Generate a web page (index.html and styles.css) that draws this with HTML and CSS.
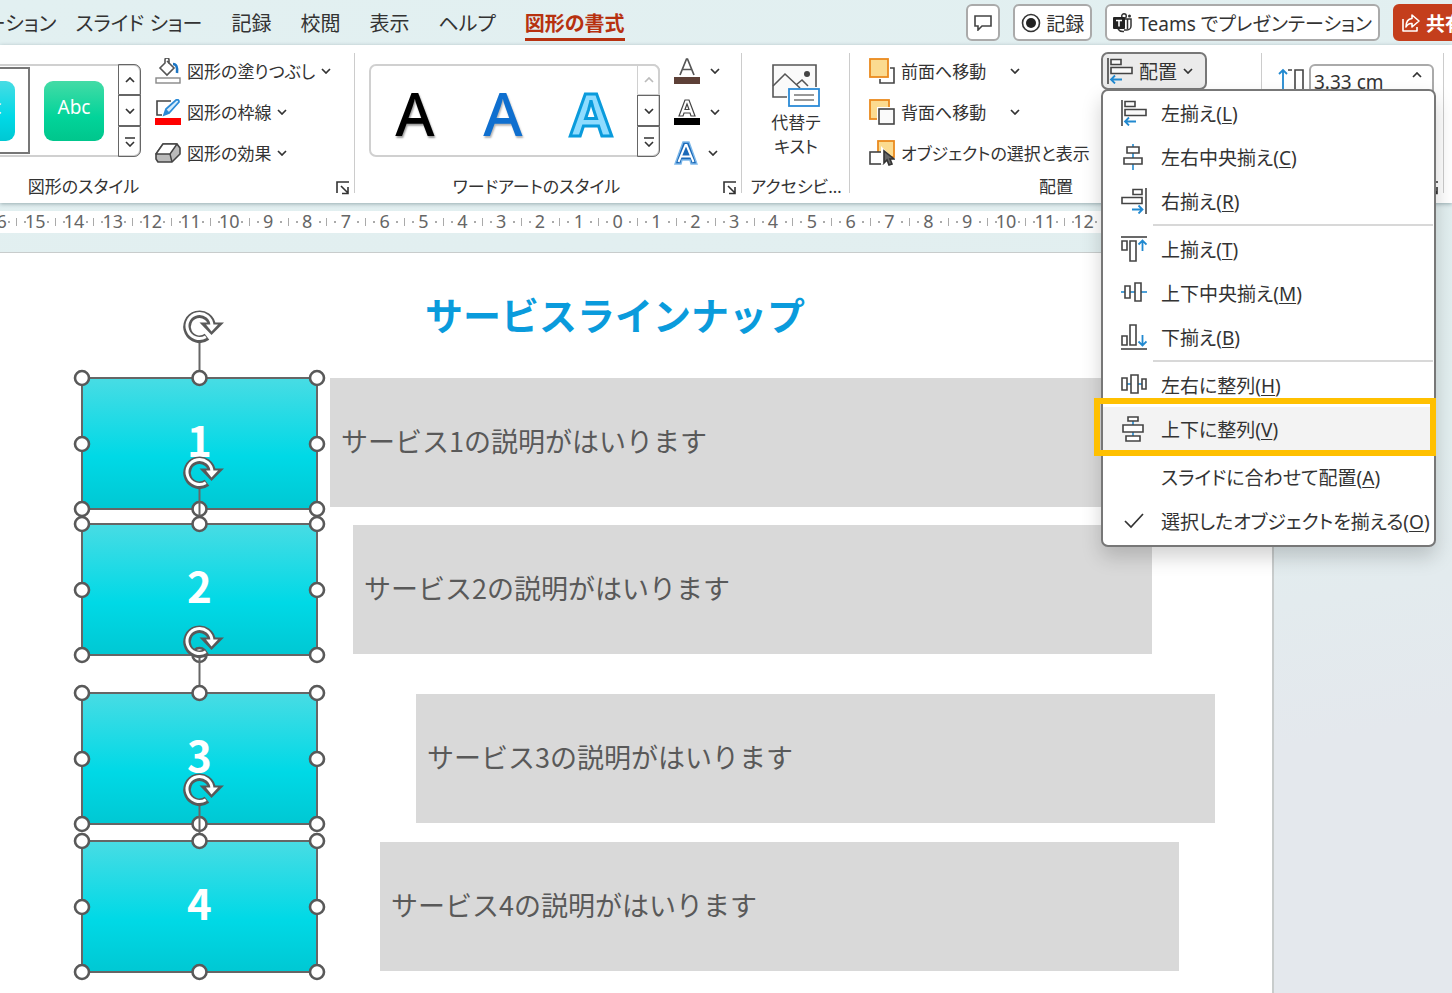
FILE: index.html
```
<!DOCTYPE html>
<html lang="ja">
<head>
    <meta charset="UTF-8">
    <title>図形の書式</title>
    <link rel="stylesheet" href="styles.css">
</head>
<body>
    <!-- 共通アイコン -->
    <svg class="defs" width="0" height="0">
        <symbol id="chev-down" viewBox="0 0 10 6"><path d="M1 1l4 4 4-4" fill="none" stroke="currentColor" stroke-width="1.7"/></symbol>
        <symbol id="chev-up" viewBox="0 0 10 6"><path d="M1 5l4-4 4 4" fill="none" stroke="currentColor" stroke-width="1.7"/></symbol>
        <symbol id="more" viewBox="0 0 12 10"><path d="M1 1h10M2 5l4 4 4-4" fill="none" stroke="currentColor" stroke-width="1.6"/></symbol>
        <symbol id="launcher" viewBox="0 0 14 14"><path d="M1 12V1h12M5 5l7 7M12 6v6.5H6" fill="none" stroke="currentColor" stroke-width="1.6"/></symbol>
        <symbol id="align-left" viewBox="0 0 26 26">
            <path d="M1 0v26" stroke="#444" stroke-width="1.6"/>
            <path d="M4 1.5h10v5H4zM4 9.5h21v6H4z" fill="#fafafa" stroke="#444" stroke-width="1.6"/>
            <path d="M4 21.5h11M8 17.5l-4 4 4 4" fill="none" stroke="#2189d0" stroke-width="1.8"/>
        </symbol>
        <symbol id="selection" viewBox="0 0 235 131" overflow="visible">
            <rect x="0" y="0" width="235" height="131" fill="none" stroke="#666" stroke-width="2"/>
            <path d="M117.500-35V0" stroke="#666" stroke-width="2"/>
            <g fill="#fff" stroke="#595959" stroke-width="2.600">
                <circle cx="0" cy="0" r="7"/><circle cx="117.500" cy="0" r="7"/><circle cx="235" cy="0" r="7"/>
                <circle cx="0" cy="66" r="7"/><circle cx="235" cy="66" r="7"/>
                <circle cx="0" cy="131" r="7"/><circle cx="117.500" cy="131" r="7"/><circle cx="235" cy="131" r="7"/>
            </g>
            <g transform="translate(117.500 -52)">
                <path d="M7.500 10.800A12.500 12.500 0 1 1 12.500 0" fill="none" stroke="#595959" stroke-width="7.600"/>
                <path d="M0-3.500H24.500L12 9z" fill="#595959"/>
                <path d="M6.300 10.800A12.500 12.500 0 1 1 12.500 0" fill="none" stroke="#fff" stroke-width="3"/>
                <path d="M6.500-1.500H18.500L12 5.500z" fill="#fff"/>
            </g>
        </symbol>
    </svg>

    <header class="topbar">
        <nav class="tabs">
            <a href="#">ーション</a>
            <a href="#">スライド ショー</a>
            <a href="#">記録</a>
            <a href="#">校閲</a>
            <a href="#">表示</a>
            <a href="#">ヘルプ</a>
            <a href="#" class="active">図形の書式</a>
        </nav>
        <div class="actions">
            <button class="action comment" aria-label="コメント">
                <svg width="18" height="16" viewBox="0 0 18 16"><path d="M1 1h16v10H8l-4 4v-4H1z" fill="none" stroke="#444" stroke-width="1.6"/></svg>
            </button>
            <button class="action">
                <svg width="20" height="20" viewBox="0 0 20 20"><circle cx="10" cy="10" r="8.500" fill="none" stroke="#333" stroke-width="1.6"/><circle cx="10" cy="10" r="5" fill="#222"/></svg>
                記録
            </button>
            <button class="action teams">
                <svg width="20" height="20" viewBox="0 0 20 20">
                    <path d="M11 6h7v7a4 4 0 0 1-4 4h-3M14.500 6v10M5 16q2 3 6 2.500" fill="none" stroke="#333" stroke-width="1.5"/>
                    <circle cx="11" cy="3" r="2.300" fill="none" stroke="#333" stroke-width="1.4"/><circle cx="16.500" cy="3" r="1.500" fill="#333"/>
                    <rect x="0" y="4" width="12" height="12" rx="1" fill="#222"/>
                    <path d="M3 7.500h6M6 7.500v6" stroke="#fff" stroke-width="1.6"/>
                </svg>
                Teams でプレゼンテーション
            </button>
            <button class="action share">
                <svg width="20" height="20" viewBox="0 0 20 20"><path d="M2 6v12h14v-4M11 2l7 6-7 6v-3.500Q7 10 5 14 5 6 11 5.500z" fill="none" stroke="#fff" stroke-width="1.6" stroke-linejoin="round"/></svg>
                共有
            </button>
        </div>
    </header>

    <div class="ribbon">
        <section class="group styles-group">
            <div class="content">
                <div class="gallery shape-gallery">
                    <button class="preset selected"><span class="swatch cyan">Abc</span></button>
                    <button class="preset"><span class="swatch green">Abc</span></button>
                    <div class="scroller">
                        <button aria-label="上へ"><svg width="10" height="6"><use href="#chev-up"/></svg></button>
                        <button aria-label="下へ"><svg width="10" height="6"><use href="#chev-down"/></svg></button>
                        <button aria-label="その他"><svg width="12" height="10"><use href="#more"/></svg></button>
                    </div>
                </div>
                <div class="rows">
                    <button class="cmd">
                        <svg width="26" height="26" viewBox="0 0 26 26">
                            <path d="M12 3l7 7-7 7-7-7 5-5V2q0-2 2-2t2 2v4" fill="none" stroke="#555" stroke-width="1.6"/>
                            <path d="M18 6q5 0 4 9" fill="none" stroke="#1b75c4" stroke-width="2.500"/>
                            <rect x="1" y="20" width="24" height="5" fill="#fff" stroke="#888" stroke-width="1.4"/>
                        </svg>
                        図形の塗りつぶし
                        <svg width="10" height="6"><use href="#chev-down"/></svg>
                    </button>
                    <button class="cmd">
                        <svg width="26" height="26" viewBox="0 0 26 26">
                            <path d="M16 2H2v14h5" fill="none" stroke="#444" stroke-width="1.6"/>
                            <path d="M9 16l2-6 10-9q3-1 3 2L14 14z" fill="#d4ebfb" stroke="#2b8ad6" stroke-width="1.8"/>
                            <path d="M9 16l2-6 4 4z" fill="#2b8ad6"/>
                            <rect y="19" width="26" height="7" fill="#f00"/>
                        </svg>
                        図形の枠線
                        <svg width="10" height="6"><use href="#chev-down"/></svg>
                    </button>
                    <button class="cmd">
                        <svg width="26" height="26" viewBox="0 0 26 26">
                            <path d="M8 4h14l3 4v6l-8 8H3l-2-3v-5z" fill="#bbb" stroke="#444" stroke-width="1.6" stroke-linejoin="round"/>
                            <path d="M8 4h14l-7 10H1z" fill="#fff" stroke="#444" stroke-width="1.4" stroke-linejoin="round"/>
                            <path d="M15 14l2 8" stroke="#444" stroke-width="1.4"/>
                        </svg>
                        図形の効果
                        <svg width="10" height="6"><use href="#chev-down"/></svg>
                    </button>
                </div>
            </div>
            <div class="label">図形のスタイル</div>
            <button class="launch" aria-label="図形の書式設定"><svg width="14" height="14"><use href="#launcher"/></svg></button>
        </section>

        <section class="group wordart-group">
            <div class="content">
                <div class="gallery">
                    <button class="art black">A</button>
                    <button class="art blue">A</button>
                    <button class="art sky">A</button>
                    <div class="scroller">
                        <button aria-label="上へ" disabled><svg width="10" height="6"><use href="#chev-up"/></svg></button>
                        <button aria-label="下へ"><svg width="10" height="6"><use href="#chev-down"/></svg></button>
                        <button aria-label="その他"><svg width="12" height="10"><use href="#more"/></svg></button>
                    </div>
                </div>
                <div class="rows">
                    <button class="cmd font-cmd" aria-label="文字の塗りつぶし">
                        <svg width="26" height="26" viewBox="0 0 26 26"><path d="M6 17L12.500 1h1L20 17M8.500 11.500h9" fill="none" stroke="#555" stroke-width="1.7"/><rect y="19" width="26" height="7" fill="#5d4037"/></svg>
                        <svg width="10" height="6"><use href="#chev-down"/></svg>
                    </button>
                    <button class="cmd font-cmd" aria-label="文字の輪郭">
                        <svg width="26" height="26" viewBox="0 0 26 26"><path d="M5 17L11 1h4l6 16h-4l-1-3h-6l-1 3zM11 10.500h4L13 5z" fill="#fff" stroke="#444" stroke-width="1.2"/><rect y="19" width="26" height="7" fill="#000"/></svg>
                        <svg width="10" height="6"><use href="#chev-down"/></svg>
                    </button>
                    <button class="cmd font-cmd" aria-label="文字の効果">
                        <svg width="24" height="26" viewBox="0 0 24 26"><path d="M1 24L9 2h6l8 22h-6l-1-4H8l-1 4z" fill="#1b69b8" stroke="#7db8ea" stroke-width="1.4"/><path d="M4.500 22L11.500 5h1l7 17M7.500 16.500h9" fill="none" stroke="#fff" stroke-width="2"/></svg>
                        <svg width="10" height="6"><use href="#chev-down"/></svg>
                    </button>
                </div>
            </div>
            <div class="label">ワードアートのスタイル</div>
            <button class="launch" aria-label="文字の効果の設定"><svg width="14" height="14"><use href="#launcher"/></svg></button>
        </section>

        <section class="group alt-group">
            <div class="content">
                <button class="alt">
                    <svg width="48" height="44" viewBox="0 0 48 44">
                        <path d="M15 33H1V1h43v22" fill="#fafafa" stroke="#555" stroke-width="1.6"/>
                        <path d="M1 22l12-12 15 14M24 21l6-5 6 6" fill="none" stroke="#555" stroke-width="1.6"/>
                        <circle cx="35" cy="10" r="3" fill="#444"/>
                        <rect x="17" y="25" width="30" height="17" fill="#fff" stroke="#2b8ad6" stroke-width="1.8"/>
                        <path d="M22 31h20M22 36h20" stroke="#777" stroke-width="1.6"/>
                    </svg>
                    <span>代替テ<br>キスト</span>
                </button>
            </div>
            <div class="label">アクセシビ…</div>
        </section>

        <section class="group arrange-group">
            <div class="content">
                <div class="rows">
                    <button class="cmd">
                        <svg width="26" height="26" viewBox="0 0 26 26"><path d="M21 10h4v15H11v-4" fill="none" stroke="#444" stroke-width="1.6"/><rect x="1" y="1" width="18" height="18" fill="#fbdb90" stroke="#ea8a1e" stroke-width="1.8"/></svg>
                        前面へ移動
                        <svg class="far" width="10" height="6"><use href="#chev-down"/></svg>
                    </button>
                    <button class="cmd">
                        <svg width="26" height="26" viewBox="0 0 26 26"><rect x="1" y="1" width="19" height="19" fill="#fbdb90" stroke="#ea8a1e" stroke-width="1.8"/><rect x="8" y="8" width="18" height="18" fill="#fff"/><rect x="10" y="10" width="15" height="15" fill="#fafafa" stroke="#444" stroke-width="1.6"/></svg>
                        背面へ移動
                        <svg class="far" width="10" height="6"><use href="#chev-down"/></svg>
                    </button>
                    <button class="cmd">
                        <svg width="26" height="26" viewBox="0 0 26 26"><rect x="9" y="1" width="16" height="16" fill="#fbdb90" stroke="#ea8a1e" stroke-width="1.8"/><rect x="1" y="12" width="12" height="12" fill="#fff" stroke="#444" stroke-width="1.6"/><path d="M12 6v19l14-4z" fill="#fff"/><path d="M15 11v12l3-3 2 5 3-1-2-5h4z" fill="#666" stroke="#333" stroke-width="1.6"/></svg>
                        オブジェクトの選択と表示
                    </button>
                </div>
                <div class="dropdown">
                    <button class="cmd toggle" aria-expanded="true">
                        <svg width="26" height="26"><use href="#align-left"/></svg>
                        配置
                        <svg width="10" height="6"><use href="#chev-down"/></svg>
                    </button>
                    <div class="menu" role="menu">
                        <button role="menuitem">
                            <svg width="26" height="26"><use href="#align-left"/></svg>
                            <span>左揃え(<u>L</u>)</span>
                        </button>
                        <button role="menuitem">
                            <svg width="26" height="26" viewBox="0 0 26 26"><path d="M12 0v26" stroke="#2189d0" stroke-width="1.6"/><path d="M6 3h12v6H6zM3 14h18v6H3z" fill="#fff" stroke="#444" stroke-width="1.6"/></svg>
                            <span>左右中央揃え(<u>C</u>)</span>
                        </button>
                        <button role="menuitem">
                            <svg width="26" height="26" viewBox="0 0 26 26"><path d="M25 0v26" stroke="#444" stroke-width="1.6"/><path d="M12 1.500h9v5h-9zM1 9.500h20v6H1z" fill="#fff" stroke="#444" stroke-width="1.6"/><path d="M11 21.500h10M17.500 17.500l4 4-4 4" fill="none" stroke="#2189d0" stroke-width="1.8"/></svg>
                            <span>右揃え(<u>R</u>)</span>
                        </button>
                        <hr>
                        <button role="menuitem">
                            <svg width="26" height="26" viewBox="0 0 26 26"><path d="M0 1h26" stroke="#444" stroke-width="1.6"/><path d="M1 5h5v9H1zM9 5h6v20H9z" fill="#fff" stroke="#444" stroke-width="1.6"/><path d="M21.500 5v10M17.500 8.500l4-4 4 4" fill="none" stroke="#2189d0" stroke-width="1.8"/></svg>
                            <span>上揃え(<u>T</u>)</span>
                        </button>
                        <button role="menuitem">
                            <svg width="26" height="26" viewBox="0 0 26 26"><path d="M0 12h26" stroke="#2189d0" stroke-width="1.6"/><path d="M4 6h5v12H4zM14 3h6v18h-6z" fill="#fff" stroke="#444" stroke-width="1.6"/></svg>
                            <span>上下中央揃え(<u>M</u>)</span>
                        </button>
                        <button role="menuitem">
                            <svg width="26" height="26" viewBox="0 0 26 26"><path d="M0 25h26" stroke="#444" stroke-width="1.6"/><path d="M1 12h5v9H1zM9 1h6v20H9z" fill="#fff" stroke="#444" stroke-width="1.6"/><path d="M21.500 11v10M17.500 17.500l4 4 4-4" fill="none" stroke="#2189d0" stroke-width="1.8"/></svg>
                            <span>下揃え(<u>B</u>)</span>
                        </button>
                        <hr>
                        <button role="menuitem">
                            <svg width="26" height="26" viewBox="0 0 26 26"><path d="M5 12h17" stroke="#2189d0" stroke-width="1.6"/><path d="M1 6h5v12H1zM10 3h7v18h-7zM21 7h4v10h-4z" fill="#fff" stroke="#444" stroke-width="1.6"/></svg>
                            <span>左右に整列(<u>H</u>)</span>
                        </button>
                        <button role="menuitem" class="current">
                            <svg width="26" height="26" viewBox="0 0 26 26"><path d="M12 3v20" stroke="#2189d0" stroke-width="1.6"/><path d="M7 1h10v4H7zM2 9h20v7H2zM5 20h14v5H5z" fill="#fff" stroke="#444" stroke-width="1.6"/></svg>
                            <span>上下に整列(<u>V</u>)</span>
                        </button>
                        <hr class="blank">
                        <button role="menuitem">
                            <svg width="26" height="26"></svg>
                            <span>スライドに合わせて配置(<u>A</u>)</span>
                        </button>
                        <button role="menuitem">
                            <svg width="26" height="26" viewBox="0 0 26 26"><path d="M4 13l6 6L22 6" fill="none" stroke="#333" stroke-width="1.7"/></svg>
                            <span>選択したオブジェクトを揃える(<u>O</u>)</span>
                        </button>
                    </div>
                </div>
            </div>
            <div class="label">配置</div>
        </section>

        <section class="group size-group">
            <div class="content">
                <label for="height" aria-label="高さ">
                    <svg width="26" height="26" viewBox="0 0 26 26"><path d="M5 2v24M1 6l4-4 4 4" fill="none" stroke="#2189d0" stroke-width="1.8"/><path d="M10 2h4M17 2h8v24h-8z" fill="none" stroke="#444" stroke-width="1.6"/></svg>
                </label>
                <div class="spin">
                    <input id="height" type="text" value="3.33 cm">
                    <svg width="10" height="6"><use href="#chev-up"/></svg>
                </div>
            </div>
            <button class="launch" aria-label="サイズ"><svg width="14" height="14"><use href="#launcher"/></svg></button>
        </section>
    </div>

    <div class="ruler">
        <span>16</span><span>15</span><span>14</span><span>13</span><span>12</span><span>11</span><span>10</span><span>9</span><span>8</span><span>7</span><span>6</span><span>5</span><span>4</span><span>3</span><span>2</span><span>1</span><span>0</span><span>1</span><span>2</span><span>3</span><span>4</span><span>5</span><span>6</span><span>7</span><span>8</span><span>9</span><span>10</span><span>11</span><span>12</span>
    </div>

    <main class="workspace">
        <div class="slide">
            <h1>サービスラインナップ</h1>
            <p class="desc d1">サービス1の説明がはいります</p>
            <p class="desc d2">サービス2の説明がはいります</p>
            <p class="desc d3">サービス3の説明がはいります</p>
            <p class="desc d4">サービス4の説明がはいります</p>
            <div class="box b1">1<svg width="235" height="131"><use href="#selection"/></svg></div>
            <div class="box b2">2<svg width="235" height="131"><use href="#selection"/></svg></div>
            <div class="box b3">3<svg width="235" height="131"><use href="#selection"/></svg></div>
            <div class="box b4">4<svg width="235" height="131"><use href="#selection"/></svg></div>
        </div>
    </main>
</body>
</html>
```

FILE: styles.css
```
* {
    box-sizing: border-box;
}
body {
    margin: 0;
    min-height: 100vh;
    display: flex;
    flex-direction: column;
    overflow: hidden;
    background: linear-gradient(170deg, #e2f0f1 0%, #e2eeef 55%, #e4e8ed 78%, #e4e8ed 100%);
    font-family: "Noto Sans", "Noto Sans CJK JP", sans-serif;
    font-feature-settings: "palt";
    font-size: 17px;
    color: #333;
}
button, input {
    font: inherit;
    font-feature-settings: inherit;
    color: inherit;
    background: none;
    border: none;
    padding: 0;
    margin: 0;
}
svg {
    display: block;
    flex: none;
}
.defs {
    position: absolute;
}

/* タブ */
.topbar {
    display: flex;
    justify-content: space-between;
    height: 45px;
    padding-top: 4px;
}
.tabs {
    display: flex;
    gap: 29px;
    margin-left: -14px;
    font-size: 20px;
    line-height: 40px;
    white-space: nowrap;
}
.tabs a {
    height: 37px;
    color: inherit;
    text-decoration: none;
}
.tabs a:first-child {
    margin-right: -10px;
}
.tabs .active {
    color: #b7310f;
    font-weight: bold;
    border-bottom: 3px solid #b7310f;
}
.actions {
    display: flex;
    gap: 13px;
    margin-right: -20px;
}
.action {
    display: flex;
    align-items: center;
    gap: 5px;
    height: 37px;
    padding: 0 6px;
    font-size: 19px;
    white-space: nowrap;
    background: #fff;
    border: 2px solid #aaa;
    border-radius: 6px;
}
.share {
    color: #fff;
    font-weight: bold;
    background: #c43e1c;
    border-color: #c43e1c;
}

/* リボン */
.ribbon {
    display: flex;
    height: 158px;
    background: #fff;
    box-shadow: 0 1px 4px rgba(60, 90, 100, 0.45);
    position: relative;
    z-index: 2;
}
.group {
    position: relative;
    flex: none;
    padding-top: 5px;
    white-space: nowrap;
}
.group::after {
    content: "";
    position: absolute;
    top: 8px;
    bottom: 10px;
    right: 0;
    width: 1px;
    background: #ccc;
}
.styles-group { width: 355px; }
.wordart-group { width: 387px; }
.alt-group { width: 108px; }
.arrange-group { width: 412px; z-index: 1; }
.arrange-group::after { z-index: -1; }
.size-group { width: 182px; }
.content {
    display: flex;
    height: 123px;
}
.label {
    line-height: 28px;
    text-align: center;
}
.styles-group .label {
    padding-right: 188px;
}
.wordart-group .label {
    padding-right: 24px;
}
.launch {
    position: absolute;
    right: 5px;
    bottom: 8px;
}
.rows {
    display: flex;
    flex-direction: column;
}
.cmd {
    display: flex;
    align-items: center;
    gap: 6px;
    height: 41px;
}
.cmd .far {
    margin-left: 18px;
}
.gallery {
    display: flex;
    height: 93px;
    margin: 14px 14px 0;
    border: 2px solid #d0d0d0;
    border-radius: 7px;
}
.shape-gallery {
    margin-left: 0;
    border-left: none;
    border-radius: 0 7px 7px 0;
}
.preset {
    height: 89px;
    padding: 0 14px;
}
.selected {
    width: 89px;
    height: 87px;
    margin: 1px 0 0 -59px;
    padding: 0 12px;
    border: 2px solid #777;
}
.swatch {
    display: block;
    width: 60px;
    height: 60px;
    border-radius: 9px;
    font-size: 19px;
    line-height: 52px;
    color: #fff;
}
.cyan {
    background: linear-gradient(#48dce4, #00d9e6 60%, #00c8d3);
}
.green {
    background: linear-gradient(#44dba6, #02d49a 60%, #00c68c);
}
.scroller {
    width: 23px;
    margin: -2px -2px -2px auto;
    display: flex;
    flex-direction: column;
}
.scroller button {
    flex: 1;
    display: flex;
    align-items: center;
    justify-content: center;
    border: 1px solid #666;
}
.scroller button:first-child {
    border-radius: 0 7px 0 0;
}
.scroller button:last-child {
    border-radius: 0 0 7px 0;
}
.scroller button:disabled {
    color: #bbb;
    border-color: #d0d0d0;
}
.wordart-group .gallery {
    width: 291px;
}
.art {
    width: 88px;
    font-size: 60px;
    font-weight: 500;
    line-height: 89px;
    padding-top: 3px;
}
.black {
    color: #000;
    text-shadow: 1px 2px 2px rgba(0, 0, 0, 0.4);
}
.blue {
    color: #0f6fcf;
    text-shadow: 1px 2px 2px rgba(0, 0, 0, 0.3);
}
.sky {
    color: #8fdcff;
    font-weight: bold;
    -webkit-text-stroke: 3px #0a9bdc;
}
.font-cmd {
    gap: 10px;
}
.alt {
    margin: 14px auto 0;
    display: flex;
    flex-direction: column;
    align-items: center;
    gap: 3px;
    height: 95px;
    line-height: 24px;
}
.arrange-group .content {
    padding-left: 19px;
    justify-content: space-between;
}
.size-group .content {
    padding: 14px 11px 0 16px;
    gap: 5px;
}
.size-group label {
    padding-top: 4px;
}
.spin {
    flex: 1;
    height: 36px;
    display: flex;
    padding: 6px 10px 0 3px;
    border: 2px solid #aaa;
    border-radius: 6px;
}
.spin input {
    width: 98px;
    height: 20px;
    font-size: 19px;
}

/* 配置メニュー */
.dropdown {
    position: relative;
    width: 161px;
    font-size: 19px;
}
.toggle {
    height: 38px;
    margin-top: 2px;
    padding: 0 12px 0 4px;
    background: #ebebeb;
    border: 2px solid #777;
    border-radius: 7px;
}
.menu {
    position: absolute;
    top: 39px;
    left: 0;
    width: 335px;
    padding-bottom: 2px;
    background: #fff;
    border: 2px solid #777;
    border-radius: 7px;
    box-shadow: 0 10px 20px rgba(0, 0, 0, 0.18);
}
.menu button {
    position: relative;
    display: flex;
    align-items: center;
    gap: 14px;
    width: 100%;
    height: 44px;
    padding-left: 18px;
}
.menu u {
    text-underline-offset: 2px;
}
.menu hr {
    height: 2px;
    margin: 1px 1px 1px 50px;
    border: none;
    background: #d8d8d8;
}
.menu .blank {
    background: none;
}
.menu .current {
    background: #f3f3f3;
}
.current::after {
    content: "";
    position: absolute;
    inset: -9px -2px -5px -9px;
    border: 6px solid #ffc000;
}

/* ルーラー */
.ruler {
    display: grid;
    grid-template-columns: repeat(29, 1fr);
    width: 1126px;
    height: 22px;
    margin: 8px 0 0 -23px;
    background: #fff;
    line-height: 21px;
    font-size: 18px;
    text-align: center;
    color: #666;
}
.ruler span {
    background:
        linear-gradient(#aaa, #aaa) 0 7px / 1px 8px no-repeat,
        linear-gradient(#aaa, #aaa) 8px 10px / 2px 2px no-repeat,
        linear-gradient(#aaa, #aaa) 31px 10px / 2px 2px no-repeat;
}

/* スライド */
.workspace {
    flex: 1;
    display: flex;
    padding: 19px 178px 0 0;
}
.slide {
    position: relative;
    flex: 1;
    min-height: 741px;
    background: #fff;
    border-top: 1px solid #c8cccc;
    border-right: 2px solid #c8cccc;
    font-family: "Noto Sans CJK JP", sans-serif;
    font-feature-settings: normal;
}
.slide h1 {
    position: absolute;
    top: 33px;
    left: 425px;
    margin: 0;
    font-size: 38px;
    line-height: 56px;
    color: #0a9bdc;
    white-space: nowrap;
}
.desc {
    position: absolute;
    width: 799px;
    height: 129px;
    margin: 0;
    padding-left: 11px;
    background: #d9d9d9;
    color: #595959;
    font-size: 27px;
    line-height: 126px;
}
.d1 { left: 330px; top: 125px; }
.d2 { left: 353px; top: 272px; }
.d3 { left: 416px; top: 441px; }
.d4 { left: 380px; top: 589px; }
.box {
    position: absolute;
    left: 82px;
    width: 235px;
    height: 131px;
    background: linear-gradient(#48dce4, #00d9e6 60%, #00c8d3);
    color: #fff;
    font-size: 42px;
    font-weight: bold;
    line-height: 122px;
    text-align: center;
}
.box svg {
    position: absolute;
    top: 0;
    left: 0;
    overflow: visible;
}
.b1 { top: 125px; }
.b2 { top: 271px; }
.b3 { top: 440px; }
.b4 { top: 588px; }
```
